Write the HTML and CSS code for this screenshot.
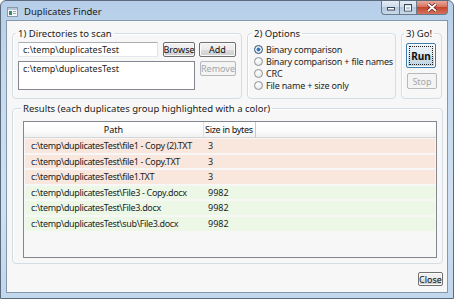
FILE: index.html
```html
<!DOCTYPE html>
<html lang="en">
<head>
  <meta charset="UTF-8">
  <title>Duplicates Finder</title>
  <link rel="stylesheet" href="styles.css">
</head>
<body>
  <div class="window">
    <!-- Title bar -->
    <div class="titlebar">
      <svg class="app-icon" width="11" height="10" viewBox="0 0 11 10">
        <rect x="0.5" y="0.5" width="10" height="9" fill="#f4f6f8" stroke="#8b98a6"/>
        <rect x="1" y="1" width="9" height="2" fill="#b7c7d8"/>
        <rect x="2" y="4" width="3" height="4" fill="#3b8a6a"/>
        <rect x="6" y="4" width="3" height="1" fill="#9aa6b2"/>
        <rect x="6" y="6" width="3" height="1" fill="#9aa6b2"/>
      </svg>
      <span class="title">Duplicates Finder</span>
      <div class="caption-buttons">
        <span class="cap cap-min">
          <svg width="10" height="6" viewBox="0 0 10 6"><rect x="1.5" y="2.5" width="7" height="2.5" fill="#fff" stroke="#3d4a58"/></svg>
        </span>
        <span class="cap cap-max">
          <svg width="10" height="8" viewBox="0 0 10 8"><rect x="1.5" y="0.5" width="7" height="6.5" fill="none" stroke="#3d4a58"/><rect x="2.5" y="2.5" width="5" height="3.5" fill="none" stroke="#fff"/></svg>
        </span>
        <span class="cap cap-close">
          <svg width="12" height="9" viewBox="0 0 12 9"><path d="M2 1 L10 8 M10 1 L2 8" stroke="#5a1a10" stroke-width="3.2"/><path d="M2 1 L10 8 M10 1 L2 8" stroke="#fff" stroke-width="1.8"/></svg>
        </span>
      </div>
    </div>

    <!-- Client area -->
    <div class="client">
      <div class="top-row">
        <fieldset class="group dirs">
          <legend>1) Directories to scan</legend>
          <div class="dirs-grid">
            <div class="textbox">c:\temp\duplicatesTest</div>
            <div class="btn">Browse</div>
            <div class="btn">Add</div>
            <div class="listbox">c:\temp\duplicatesTest</div>
            <div class="btn disabled remove">Remove</div>
          </div>
        </fieldset>

        <fieldset class="group options">
          <legend>2) Options</legend>
          <div class="radio checked"><span class="dot"></span>Binary comparison</div>
          <div class="radio"><span class="dot"></span>Binary comparison + file names</div>
          <div class="radio"><span class="dot"></span>CRC</div>
          <div class="radio"><span class="dot"></span>File name + size only</div>
        </fieldset>

        <fieldset class="group go">
          <legend>3) Go!</legend>
          <div class="btn run"><span class="focus">Run</span></div>
          <div class="btn disabled stop">Stop</div>
        </fieldset>
      </div>

      <fieldset class="group results">
        <legend>Results (each duplicates group highlighted with a color)</legend>
        <div class="listview">
          <div class="lv-header">
            <div class="col-path">Path</div>
            <div class="col-size">Size in bytes</div>
            <div class="col-fill"></div>
          </div>
          <div class="lv-rows">
            <div class="lv-row red"><span class="cell-path">c:\temp\duplicatesTest\file1 - Copy (2).TXT</span><span class="cell-size">3</span></div>
            <div class="lv-row red"><span class="cell-path">c:\temp\duplicatesTest\file1 - Copy.TXT</span><span class="cell-size">3</span></div>
            <div class="lv-row red"><span class="cell-path">c:\temp\duplicatesTest\file1.TXT</span><span class="cell-size">3</span></div>
            <div class="lv-row green"><span class="cell-path">c:\temp\duplicatesTest\File3 - Copy.docx</span><span class="cell-size">9982</span></div>
            <div class="lv-row green"><span class="cell-path">c:\temp\duplicatesTest\File3.docx</span><span class="cell-size">9982</span></div>
            <div class="lv-row green"><span class="cell-path">c:\temp\duplicatesTest\sub\File3.docx</span><span class="cell-size">9982</span></div>
          </div>
        </div>
      </fieldset>

      <div class="footer">
        <div class="btn close">Close</div>
      </div>
    </div>
  </div>
</body>
</html>
```

FILE: styles.css
```css
/* General styles */
* {
  box-sizing: border-box;
}

body {
  margin: 0;
  font-family: "Noto Sans", "Open Sans", sans-serif;
  font-size: 9px;
  color: #1c1f26;
  background: #ffffff;
}

/* Window frame (Aero style) */
.window {
  width: 454px;
  height: 299px;
  border: 1px solid #5b6b7c;
  border-radius: 6px 6px 0 0;
  background: linear-gradient(to bottom, #b6cee8 0%, #c6daef 25%, #cfe0f2 70%, #c2d6ec 100%);
  padding: 0 5px 5px 5px;
  display: flex;
  flex-direction: column;
}

.titlebar {
  height: 19px;
  display: flex;
  align-items: flex-start;
}

.app-icon {
  margin: 6px 0 0 1px;
}

.title {
  margin: 5px 0 0 6px;
  font-size: 9.5px;
  line-height: 12px;
  color: #1a1a1a;
}

.caption-buttons {
  margin-left: auto;
  display: flex;
  height: 14px;
}

.cap {
  display: flex;
  align-items: center;
  justify-content: center;
  border: 1px solid #6b7a8b;
  border-top: none;
  background: linear-gradient(to bottom, #e3ecf5 0%, #cfdcea 45%, #b6c8dc 50%, #c9d9ea 100%);
}

.cap-min {
  width: 18px;
  border-radius: 0 0 0 4px;
  border-right: none;
}

.cap-max {
  width: 18px;
}

.cap-close {
  width: 31px;
  border-left: none;
  border-radius: 0 0 4px 0;
  background: linear-gradient(to bottom, #e9a99b 0%, #d9705e 45%, #c3452f 50%, #d5735c 100%);
}

/* Client area */
.client {
  flex: 1;
  border: 1px solid #8497ac;
  background: #f7f7f7;
  padding: 6px 4px 6px 5px;
  display: flex;
  flex-direction: column;
}

.top-row {
  display: grid;
  grid-template-columns: 230px 149px 41px;
  column-gap: 5px;
  height: 72px;
}

.go {
  margin-left: 1px;
}

/* Group boxes */
.group {
  margin: 0;
  border: 1px solid #d3dde4;
  border-radius: 4px;
  box-shadow: inset 1px 1px 0 #ffffff;
  min-width: 0;
}

.group legend {
  padding: 0 2px;
  margin-left: -2px;
  line-height: 13px;
  font-size: 9.5px;
  color: #1a1a1a;
  white-space: nowrap;
}

.dirs {
  padding: 2px 5px 0 5px;
}

.dirs-grid {
  display: grid;
  grid-template-columns: 140px 32px 36px;
  grid-template-rows: 15px 29px;
  column-gap: 5px;
  row-gap: 4px;
}

.dirs-grid .btn:nth-child(3) {
  margin-left: -1px;
}

.textbox {
  border: 1px solid #abadb3;
  border-color: #abadb3 #e2e3ea #e3e9ef #e2e3ea;
  background: #ffffff;
  padding: 0 4px;
  line-height: 13px;
  white-space: nowrap;
}

.listbox {
  grid-column: 1 / 3;
  border: 1px solid #828790;
  background: #ffffff;
  padding: 0 4px;
  line-height: 13px;
}

.remove {
  height: 15px;
}

/* Buttons */
.btn {
  display: flex;
  align-items: center;
  justify-content: center;
  border: 1px solid #707070;
  border-radius: 2px;
  background: linear-gradient(to bottom, #f2f2f2 0%, #ebebeb 50%, #dddddd 51%, #cfcfcf 100%);
  box-shadow: inset 0 0 0 1px #fbfbfb;
  color: #101010;
  white-space: nowrap;
}

.btn.disabled {
  border-color: #b4b9bd;
  background: #f4f4f4;
  box-shadow: none;
  color: #a3a6a9;
}

/* Options */
.options {
  padding: 3px 0 0 6px;
}

.radio {
  height: 12px;
  display: flex;
  align-items: center;
  gap: 3px;
  white-space: nowrap;
  letter-spacing: -0.2px;
}

.dot {
  flex-shrink: 0;
  width: 9px;
  height: 9px;
  border-radius: 50%;
  border: 1px solid #8d9297;
  background: radial-gradient(circle at 40% 35%, #ffffff 0%, #eceef0 60%, #d4d7da 100%);
}

.radio.checked .dot {
  background: radial-gradient(circle, #1b63b1 0%, #3a8ad3 35%, #dfe8f0 45%, #f5f7f9 100%);
  border-color: #2c4c6e;
}

/* Go */
.go {
  padding: 3px 0 0 4px;
  display: flex;
  flex-direction: column;
  gap: 5px;
}

.run {
  width: 30px;
  height: 25px;
  border-color: #3c7fb1;
  padding: 2px;
  font-weight: bold;
  font-size: 10px;
  background: linear-gradient(to bottom, #ecf3f8 0%, #e0ebf3 50%, #cddde9 51%, #c4d6e4 100%);
}

.run .focus {
  width: 100%;
  height: 100%;
  display: flex;
  align-items: center;
  justify-content: center;
  border: 1px dotted #202020;
}

.stop {
  width: 30px;
  height: 16px;
  margin-left: 1px;
}

/* Results */
.results {
  flex: 1;
  margin-top: 3px;
  padding: 6px 5px 5px 10px;
  display: flex;
  flex-direction: column;
}

.listview {
  flex: 1;
  border: 1px solid #828790;
  background: #f7f7f7;
  display: flex;
  flex-direction: column;
}

.lv-header {
  display: flex;
  height: 16px;
  line-height: 15px;
  background: linear-gradient(to bottom, #ffffff 0%, #fbfbfb 60%, #f1f2f3 100%);
  border-bottom: 1px solid #d5d5d5;
  color: #111;
}

.col-path {
  width: 180px;
  text-align: center;
  border-right: 1px solid #dadfe3;
}

.col-size {
  width: 52px;
  padding-left: 1px;
  letter-spacing: -0.3px;
  white-space: nowrap;
  border-right: 1px solid #c5cacf;
}

.col-fill {
  flex: 1;
}

.lv-rows {
  padding: 1px 1px 0 1px;
  display: flex;
  flex-direction: column;
  gap: 2px;
}

.lv-row {
  display: flex;
  height: 13.6px;
  line-height: 13px;
  white-space: nowrap;
}

.lv-row.red {
  background: #f9e6dc;
}

.lv-row.green {
  background: #ecf7e6;
}

.cell-path {
  width: 178px;
  padding-left: 6px;
  letter-spacing: -0.35px;
}

.cell-size {
  padding-left: 5px;
}

/* Footer */
.footer {
  display: flex;
  justify-content: flex-end;
  margin-top: 8px;
}

.close {
  width: 25px;
  height: 14px;
}
```
